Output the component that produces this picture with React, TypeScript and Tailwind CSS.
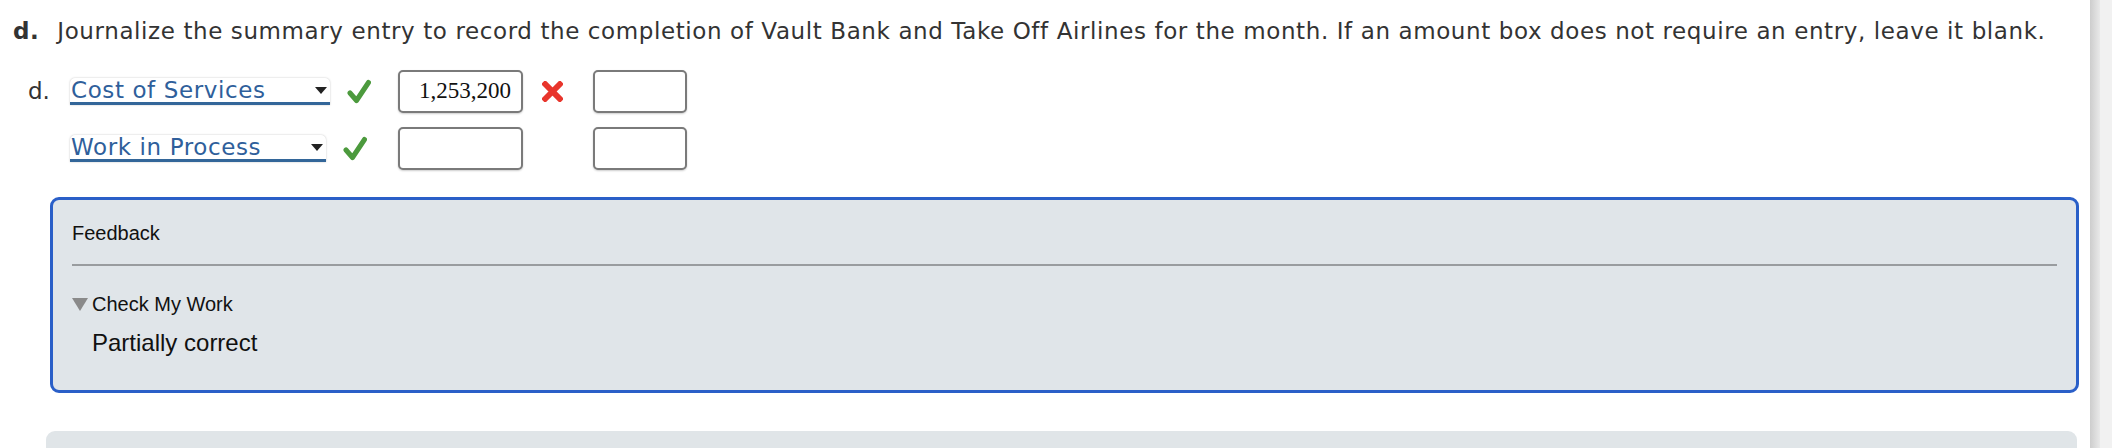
import React from 'react';

function Check({ className = '' }: { className?: string }) {
  return (
    <svg viewBox="0 0 24 26" className={className} aria-hidden>
      <path d="M3 14 L9.5 21.5 L21.5 3.5" fill="none" stroke="#4c9a3d" strokeWidth="5" strokeLinecap="round" strokeLinejoin="round" />
    </svg>
  );
}

function Cross() {
  return (
    <svg viewBox="0 0 20 20" className="w-[21px] h-[21px]" aria-hidden>
      <path d="M3 3 L17 17 M17 3 L3 17" stroke="#e8352c" strokeWidth="5.5" strokeLinecap="square" />
    </svg>
  );
}

function Select({ label, width }: { label: string; width: string }) {
  return (
    <div className={`${width} h-[27px] flex items-center justify-between bg-white rounded-t-[5px] shadow-[0_0_2px_rgba(0,0,0,0.25)] border-b-[3px] border-[#336699]`}>
      <span className="text-[23px] leading-[24px] tracking-[0.6px] text-[#2f5f9b] pl-[1px]">{label}</span>
      <span className="mr-[3px] w-0 h-0 border-l-[6px] border-r-[6px] border-t-[7px] border-l-transparent border-r-transparent border-t-[#222]" />
    </div>
  );
}

function Amount({ value = '', width }: { value?: string; width: string }) {
  return (
    <div className={`${width} h-[43px] rounded-[5px] border-2 border-[#7a7a7a] bg-white shadow-[0_1px_2px_rgba(0,0,0,0.2)] flex items-center justify-end pr-[10px] font-['Liberation_Serif',serif] text-[23px] text-[#111]`}>
      {value}
    </div>
  );
}

export default function App() {
  return (
    <div className="flex w-[2112px] h-[448px] overflow-hidden bg-white">
      <div className="flex-1 font-['DejaVu_Sans',Verdana,sans-serif] text-[#333]">
        <p className="pl-[13px] pt-[16px] text-[23px] leading-[30px] tracking-[0.6px] whitespace-nowrap">
          <b className="mr-[10px]">d.</b> Journalize the summary entry to record the completion of Vault Bank and Take Off Airlines for the month. If an amount box does not require an entry, leave it blank.
        </p>

        <div className="mt-[24px] flex flex-col gap-[14px]">
          <div className="flex items-center h-[43px]">
            <span className="w-[70px] pl-[28px] text-[23px]">d.</span>
            <div className="w-[328px] flex items-center">
              <Select label="Cost of Services" width="w-[260px]" />
              <Check className="ml-[17px] w-[24px] h-[26px]" />
            </div>
            <Amount value="1,253,200" width="w-[125px]" />
            <div className="w-[70px] flex items-center pl-[19px]">
              <Cross />
            </div>
            <Amount width="w-[94px]" />
          </div>

          <div className="flex items-center h-[43px]">
            <span className="w-[70px]" />
            <div className="w-[328px] flex items-center">
              <Select label="Work in Process" width="w-[256px]" />
              <Check className="ml-[17px] w-[24px] h-[26px]" />
            </div>
            <Amount width="w-[125px]" />
            <div className="w-[70px]" />
            <Amount width="w-[94px]" />
          </div>
        </div>

        <div className="ml-[50px] mt-[27px] w-[2029px] h-[196px] rounded-[9px] border-[3px] border-[#2a5fc8] bg-[#e0e5e9] font-['Liberation_Sans',Arial,sans-serif] text-[#111] px-[19px]">
          <div className="pt-[22px] text-[20px] leading-[22px]">Feedback</div>
          <div className="mt-[20px] h-[2px] bg-[#999c9f]" />
          <div className="mt-[27px] flex items-center gap-[4px] text-[20px] leading-[22px]">
            <span className="w-0 h-0 border-l-[8px] border-r-[8px] border-t-[13px] border-l-transparent border-r-transparent border-t-[#8a8a8a]" />
            <span>Check My Work</span>
          </div>
          <div className="mt-[14px] pl-[20px] text-[24px] leading-[28px]">Partially correct</div>
        </div>

        <div className="ml-[46px] mt-[38px] w-[2031px] h-[40px] rounded-[9px] bg-[#e0e5e8]" />
      </div>
      <div className="w-[22px] h-full flex">
        <div className="w-[10px] h-full bg-gradient-to-r from-[#cdcdcd] to-[#e9e9e9]" />
        <div className="flex-1 h-full bg-[#f1f1f1]" />
      </div>
    </div>
  );
}
